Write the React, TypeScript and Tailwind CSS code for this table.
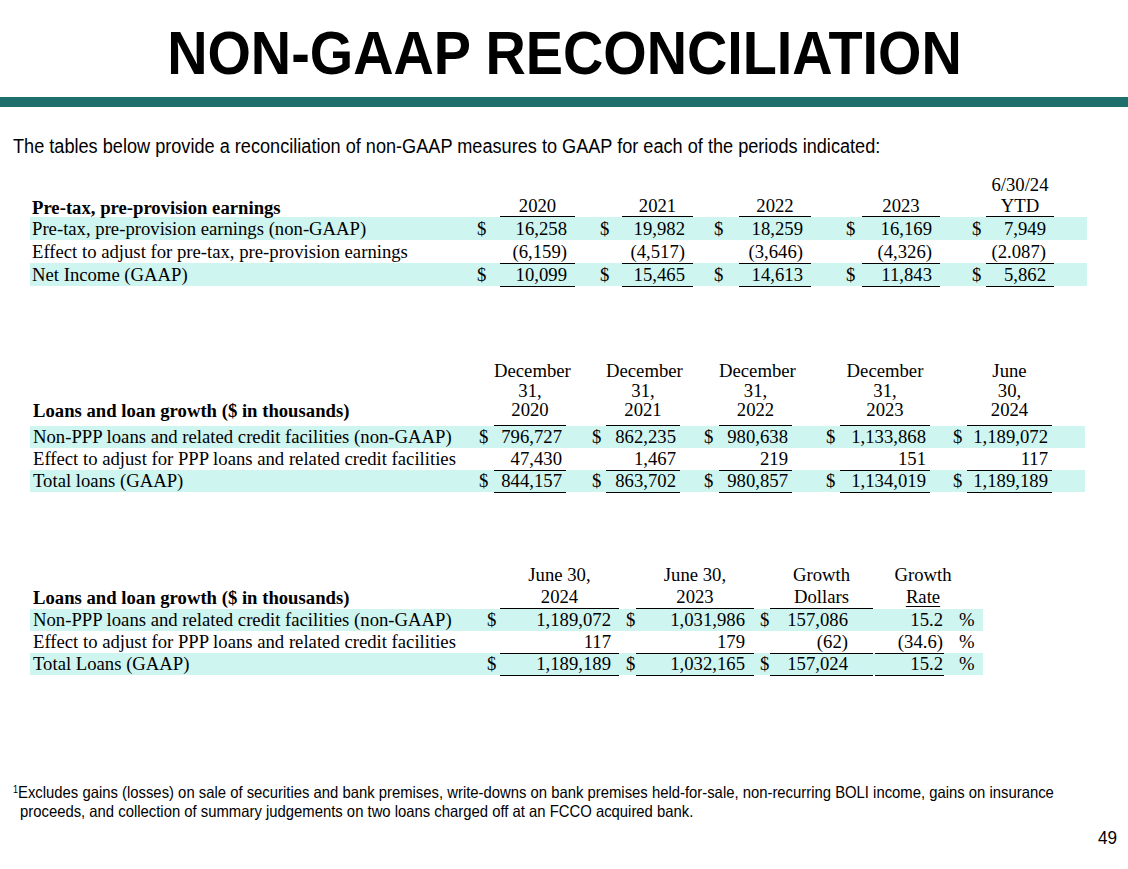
import { Fragment } from 'react'

const serif = "font-['Liberation_Serif','Times_New_Roman',serif]"
const sans = "font-['Liberation_Sans',Arial,sans-serif]"
const teal = 'bg-[#cff5f1]'

type Row = { label: string; dollar: boolean; vals: string[]; teal: boolean; line: boolean }

const t1Rows: Row[] = [
  { label: 'Pre-tax, pre-provision earnings (non-GAAP)', dollar: true, vals: ['16,258', '19,982', '18,259', '16,169', '7,949'], teal: true, line: false },
  { label: 'Effect to adjust for pre-tax, pre-provision earnings', dollar: false, vals: ['(6,159)', '(4,517)', '(3,646)', '(4,326)', '(2.087)'], teal: false, line: true },
  { label: 'Net Income (GAAP)', dollar: true, vals: ['10,099', '15,465', '14,613', '11,843', '5,862'], teal: true, line: true },
]

const t2Rows: Row[] = [
  { label: 'Non-PPP loans and related credit facilities (non-GAAP)', dollar: true, vals: ['796,727', '862,235', '980,638', '1,133,868', '1,189,072'], teal: true, line: false },
  { label: 'Effect to adjust for PPP loans and related credit facilities', dollar: false, vals: ['47,430', '1,467', '219', '151', '117'], teal: false, line: true },
  { label: 'Total loans (GAAP)', dollar: true, vals: ['844,157', '863,702', '980,857', '1,134,019', '1,189,189'], teal: true, line: true },
]

const t3Rows: Row[] = [
  { label: 'Non-PPP loans and related credit facilities (non-GAAP)', dollar: true, vals: ['1,189,072', '1,031,986', '157,086', '15.2'], teal: true, line: false },
  { label: 'Effect to adjust for PPP loans and related credit facilities', dollar: false, vals: ['117', '179', '(62)', '(34.6)'], teal: false, line: true },
  { label: 'Total Loans (GAAP)', dollar: true, vals: ['1,189,189', '1,032,165', '157,024', '15.2'], teal: true, line: true },
]

function PreTaxTable() {
  const cols = 'grid grid-cols-[440px_30px_75px_47px_71px_46px_72px_51px_78px_46px_68px_33px]'
  const dollarPad = ['pl-[7px]', 'pl-[25px]', 'pl-[21px]', 'pl-[35px]', 'pl-[32px]']
  const heads = [['2020'], ['2021'], ['2022'], ['2023'], ['6/30/24', 'YTD']]
  return (
    <div className={`ml-[30px] w-[1057px] ${serif} text-[18.7px] text-black`}>
      <div className={`${cols} items-end`}>
        <div className="font-bold leading-[19px] pl-[2px] whitespace-nowrap">Pre-tax, pre-provision earnings</div>
        {heads.map((h, i) => (
          <Fragment key={i}>
            <div />
            <div className="border-b border-black text-center leading-[21px]">
              {h.map(l => <div key={l}>{l}</div>)}
            </div>
          </Fragment>
        ))}
        <div />
      </div>
      {t1Rows.map(r => (
        <div key={r.label} className={`${cols} h-[23px] leading-[23px] ${r.teal ? teal : ''}`}>
          <div className="pl-[2px] whitespace-nowrap">{r.label}</div>
          {r.vals.map((v, i) => (
            <Fragment key={i}>
              <div className={dollarPad[i]}>{r.dollar ? '$' : ''}</div>
              <div className={`text-right pr-[8px] ${r.line ? 'border-b border-black' : ''}`}>{v}</div>
            </Fragment>
          ))}
          <div />
        </div>
      ))}
    </div>
  )
}

function LoansTable() {
  const cols = 'grid grid-cols-[440px_24px_72px_40px_74px_39px_73px_48px_90px_37px_85px_33px]'
  const dollarPad = ['pl-[9px]', 'pl-[26px]', 'pl-[24px]', 'pl-[34px]', 'pl-[23px]']
  const heads = [
    ['December', '31,', '2020'],
    ['December', '31,', '2021'],
    ['December', '31,', '2022'],
    ['December', '31,', '2023'],
    ['June', '30,', '2024'],
  ]
  return (
    <div className={`ml-[30px] w-[1055px] ${serif} text-[18.7px] text-black`}>
      <div className={`${cols} items-end`}>
        <div className="font-bold leading-[19.5px] pl-[3px] pb-[5px] whitespace-nowrap">Loans and loan growth ($ in thousands)</div>
        {heads.map((h, i) => (
          <Fragment key={i}>
            <div />
            <div className="border-b border-black text-center leading-[19.5px] pb-[5px] whitespace-nowrap">
              {h.map((l, j) => <div key={j}>{l}</div>)}
            </div>
          </Fragment>
        ))}
        <div />
      </div>
      {t2Rows.map(r => (
        <div key={r.label} className={`${cols} h-[22px] leading-[22px] ${r.teal ? teal : ''}`}>
          <div className="pl-[3px] whitespace-nowrap">{r.label}</div>
          {r.vals.map((v, i) => (
            <Fragment key={i}>
              <div className={dollarPad[i]}>{r.dollar ? '$' : ''}</div>
              <div className={`text-right pr-[4px] ${r.line ? 'border-b border-black' : ''}`}>{v}</div>
            </Fragment>
          ))}
          <div />
        </div>
      ))}
    </div>
  )
}

function GrowthTable() {
  const cols = 'grid grid-cols-[440px_30px_119px_17px_118px_16px_103px_2px_69px_27px_12px]'
  const dollarPad = ['pl-[17px]', 'pl-[7px]', 'pl-[6px]']
  const numPad = ['pr-[8px]', 'pr-[9px]', 'pr-[25px]', 'pr-[1px]']
  return (
    <div className={`ml-[30px] w-[953px] ${serif} text-[18.7px] text-black`}>
      <div className={`${cols} items-end leading-[22px]`}>
        <div className="font-bold pl-[3px] whitespace-nowrap">Loans and loan growth ($ in thousands)</div>
        <div />
        <div className="border-b border-black text-center"><div>June 30,</div><div>2024</div></div>
        <div />
        <div className="border-b border-black text-center"><div>June 30,</div><div>2023</div></div>
        <div />
        <div className="border-b border-black text-center"><div>Growth</div><div>Dollars</div></div>
        <div />
        <div className="col-span-2 text-center pb-[1px]"><div>Growth</div><div><span className="underline underline-offset-[3px]">Rate</span></div></div>
        <div />
      </div>
      {t3Rows.map(r => (
        <div key={r.label} className={`${cols} h-[22px] leading-[22px] ${r.teal ? teal : ''}`}>
          <div className="pl-[3px] whitespace-nowrap">{r.label}</div>
          {r.vals.map((v, i) => (
            <Fragment key={i}>
              {i < 3 && <div className={dollarPad[i]}>{r.dollar ? '$' : ''}</div>}
              {i === 3 && <div />}
              <div className={`text-right ${numPad[i]} ${r.line ? 'border-b border-black' : ''}`}>{v}</div>
            </Fragment>
          ))}
          <div className="pl-[15px]">%</div>
          <div />
        </div>
      ))}
    </div>
  )
}

export default function App() {
  return (
    <div className="w-[1128px] h-[869px] bg-white overflow-hidden flex flex-col">
      <h1 className={`pt-[22px] text-center ${sans} font-bold text-[62px] leading-[62px] text-black`}>
        <span className="inline-block scale-x-[0.9]">NON-GAAP RECONCILIATION</span>
      </h1>
      <div className="mt-[13px] h-[10px] bg-[#1f706c]" />

      <p className={`mt-[28px] pl-[13px] ${sans} text-[19.5px] leading-[22px] text-black whitespace-nowrap`}>
        <span className="inline-block origin-left scale-x-[0.93]">
          The tables below provide a reconciliation of non-GAAP measures to GAAP for each of the periods indicated:
        </span>
      </p>

      <div className="mt-[17px]">
        <PreTaxTable />
      </div>

      <div className="mt-[75px]">
        <LoansTable />
      </div>

      <div className="mt-[72px]">
        <GrowthTable />
      </div>

      <div className={`mt-[108px] ${sans} text-[16.5px] leading-[19px] text-black`}>
        <div className="pl-[13px] whitespace-nowrap">
          <span className="inline-block origin-left scale-x-[0.9]">
            <sup className="text-[10px]">1</sup>Excludes gains (losses) on sale of securities and bank premises, write-downs on bank premises held-for-sale, non-recurring BOLI income, gains on insurance
          </span>
        </div>
        <div className="pl-[20px] whitespace-nowrap">
          <span className="inline-block origin-left scale-x-[0.9]">
            proceeds, and collection of summary judgements on two loans charged off at an FCCO acquired bank.
          </span>
        </div>
      </div>

      <div className={`mt-[6px] pr-[11px] text-right ${sans} text-[19px] leading-[22px] text-black`}>
        <span className="inline-block origin-right scale-x-[0.9]">49</span>
      </div>
    </div>
  )
}
